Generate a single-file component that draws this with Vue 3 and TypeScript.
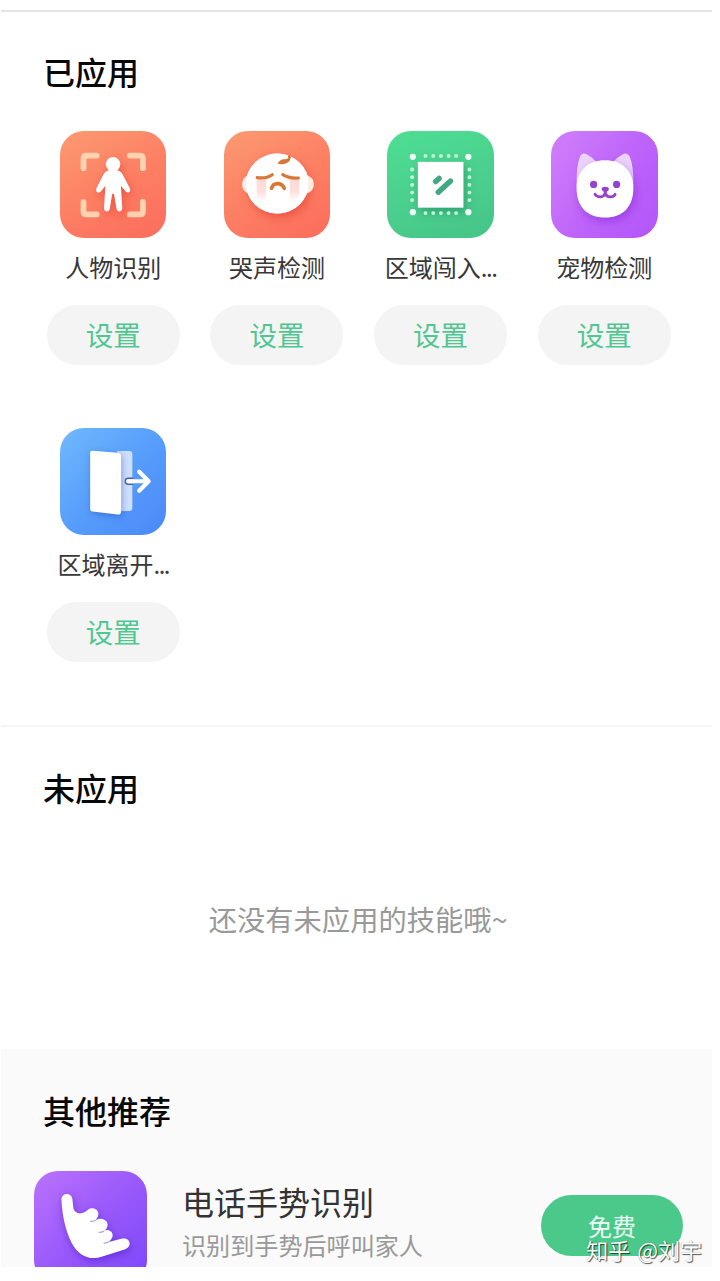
<script setup lang="ts">
interface Skill {
  kind: 'person' | 'cry' | 'area' | 'pet' | 'leave'
  name: string
  more?: boolean
}

const applied: Skill[] = [
  { kind: 'person', name: '人物识别' },
  { kind: 'cry', name: '哭声检测' },
  { kind: 'area', name: '区域闯入', more: true },
  { kind: 'pet', name: '宠物检测' },
  { kind: 'leave', name: '区域离开', more: true },
]

const dots: number[] = [38.3, 46, 53.7, 61.3, 68.8]
const corners: number[][] = [[25.7, 25.7], [81, 25.7], [25.7, 80.8], [81, 80.8]]
</script>

<template>
  <div class="screen">
    <section class="applied">
      <h2 class="heading">已应用</h2>
      <div class="grid">
        <div v-for="skill in applied" :key="skill.name" class="skill">
          <div class="tile" :class="skill.kind">
            <svg v-if="skill.kind === 'person'" viewBox="0 0 106 106">
              <g fill="none" stroke="#ffd2b0" stroke-width="5.8" stroke-linecap="round" stroke-linejoin="round">
                <path d="M23.4 37V27.5q0-3 3-3H36.5M69.5 24.5H79.5q3 0 3 3V37M82.5 70.5V80q0 3-3 3H69.5M36.5 83H26.4q-3 0-3-3V70.5" />
              </g>
              <g class="shade-red" fill="#fff">
                <circle cx="52.8" cy="33.2" r="7.2" />
                <path d="M47 39.5Q52.8 37.8 58.6 39.5Q61.5 40.8 62.800 44L69.700 57.300Q70.600 60 68.500 61Q66.400 61.700 65 59.700L60.600 54.500L62 76.500Q61.900 80 59.200 80Q56.700 80 56.200 77.300L53.900 63.500Q52.900 61 51.800 63.500L49.600 77.300Q49 80 46.500 80Q43.800 80 43.800 76.500L45.200 54.500L41 59.700Q39.300 61.800 37.200 61Q35.300 60 36.100 57.300L42.900 44Q44.200 40.800 47 39.500Z" />
              </g>
            </svg>

            <svg v-else-if="skill.kind === 'cry'" viewBox="0 0 106 106">
              <defs>
                <linearGradient id="tear" x1="0" y1="0" x2="0" y2="1">
                  <stop offset="0" stop-color="#ffd9d4" />
                  <stop offset=".55" stop-color="#ffe0dc" />
                  <stop offset="1" stop-color="#fff" />
                </linearGradient>
              </defs>
              <ellipse class="shade-red" cx="53" cy="52.300" rx="31.200" ry="29.800" fill="#fff" />
              <path d="M24.500 43.500Q18 46.500 18 53Q18 60 24.500 62.500ZM82 43.500Q89.500 46.500 89.500 53Q89.500 60 82 62.500Z" fill="#ffece0" />
              <ellipse cx="53" cy="52.300" rx="31.200" ry="29.800" fill="#fff" />
              <path d="M32.500 48h9.500v22h-7q-2.500-3-2.500-7zM65.500 48h9.500v15q-1 4-3 7h-6.500z" fill="url(#tear)" />
              <g fill="none" stroke="#d97836" stroke-width="3.200" stroke-linecap="round">
                <path d="M33 46.400Q42 47.800 48 43.500M58.500 43.500Q64.500 47.500 74 46.800" />
                <path d="M47.300 57C49 50.800 57.500 50.800 60 57" stroke-width="3.600" />
                <path d="M65 25.300Q66 28.800 61.500 29.200Q57 29.300 55.500 31.500Q61 32.500 64.500 28.800" stroke-width="2.600" />
              </g>
            </svg>

            <svg v-else-if="skill.kind === 'area'" viewBox="0 0 106 106">
              <rect class="shade-green" x="30.700" y="30.700" width="45.400" height="45.600" fill="#fff" />
              <g fill="#f2fff8">
                <circle v-for="(c, i) in corners" :key="i" :cx="c[0]" :cy="c[1]" r="3.100" />
              </g>
              <g fill="#c5f8dd">
                <template v-for="d in dots" :key="d">
                  <circle :cx="d" cy="24.800" r="1.900" />
                  <circle :cx="d" cy="81.700" r="1.900" />
                  <circle cx="25" :cy="d" r="1.900" />
                  <circle cx="82" :cy="d" r="1.900" />
                </template>
              </g>
              <path d="M48.400 50.300L51.800 47.200M51 61L63.200 49.800" fill="none" stroke="#40a982" stroke-width="5.400" stroke-linecap="round" />
            </svg>

            <svg v-else-if="skill.kind === 'pet'" viewBox="0 0 106 106">
              <path d="M25.500 55Q25 36 28.500 26.500Q31 20.500 36 23.500Q42 27 46 31.500L35 45ZM82 55Q82.500 36 78.500 26Q76 20.500 71 23.500Q65 27 61 31.500L72 45Z" fill="#ead3fb" />
              <path class="shade-purple" d="M53.700 29C70 29 82 39 82 56.500C82 75 72 86.200 53.700 86.200C35.500 86.200 25.400 75 25.400 56.500C25.400 39 37.500 29 53.700 29Z" fill="#fff" />
              <g fill="#9443cc">
                <circle cx="42.400" cy="53.200" r="3.600" />
                <circle cx="65.300" cy="53.200" r="3.600" />
                <path d="M51 56.200Q54 55 57 56.200Q58.600 57.500 57 59.300L54 61.600L51 59.300Q49.400 57.500 51 56.200Z" />
              </g>
              <path d="M54 60.500Q53.700 65.500 49 65.500Q45.500 65.600 43.800 63M54 60.500Q54.500 65.500 59 65.500Q62.500 65.600 63.800 63" fill="none" stroke="#9443cc" stroke-width="2.800" stroke-linecap="round" />
            </svg>

            <svg v-else viewBox="0 0 106 106">
              <path d="M57 22.800H69Q72 22.800 72 26V79.500Q72 82.500 69 82.500H57Z" fill="#cfdefd" />
              <path class="shade-blue" d="M32.500 22.700L57.500 24.700Q60.800 25.200 60.800 28.500V83Q60.800 86.500 57.300 86.100L32.300 83.200Q30 82.900 30 80.300V25Q30 22.500 32.500 22.700Z" fill="#fff" />
              <path d="M73 50H68Q65 50 65 53Q65 56 68 56H73" fill="#cfdefd" stroke="#425f9e" stroke-width="1.400" />
              <path d="M68 53H88M78.800 43.500L88.200 53L78.800 62.500" fill="none" stroke="#fff" stroke-width="4.200" stroke-linecap="round" stroke-linejoin="round" />
            </svg>
          </div>
          <div class="name">{{ skill.name }}<span v-if="skill.more" class="more">...</span></div>
          <button class="setup">设置</button>
        </div>
      </div>
    </section>

    <section class="unused">
      <h2 class="heading">未应用</h2>
      <p class="empty">还没有未应用的技能哦~</p>
    </section>

    <section class="recommend">
      <h2 class="heading">其他推荐</h2>
      <div class="row">
        <div class="tile gesture">
          <svg viewBox="0 0 112 112">
            <path class="shade-violet" d="M27.200 28.500C27 21.500 37 20.800 38 27.500L39 36.500C39.500 40 42.500 42 45.500 42C49 42 51 40.500 53.500 38.500C58 35 63.800 38 63.800 42.500C63.800 45 62.500 47 60.500 49C65 45.500 73 47.500 73 53.500C73 56 71 58.500 69 59.800C73 56.800 78 59.500 78 64C78 66.500 76 68.800 74 70.300L87.500 67C95.500 65.300 97.500 75 90.500 77.500L67 85C54 89.500 43 82 37.500 71.500C31 59 28 44 27.200 28.500Z" fill="#fff" />
            <path d="M60.500 49Q58 50.200 56 50M69 59.800Q66.500 61 64.500 60.800M74 70.300Q71.500 71.500 69.500 71.500" fill="none" stroke="#b6a0d8" stroke-width="1.200" stroke-linecap="round" />
          </svg>
        </div>
        <div class="info">
          <div class="title">电话手势识别</div>
          <div class="desc">识别到手势后呼叫家人</div>
        </div>
        <button class="free">免费</button>
      </div>
    </section>

    <div class="watermark">知乎 @刘宇</div>
  </div>
</template>

<style>
body {
  background: #fff;
}
</style>

<style scoped>
.screen {
  position: relative;
  box-sizing: border-box;
  width: 712px;
  height: 1267px;
  padding: 10px 0 0 1px;
  overflow: hidden;
  background: #fff;
  font-family: "Noto Sans CJK SC", sans-serif;
}

.heading {
  margin: 0;
  padding-left: 42px;
  font-size: 32px;
  line-height: 40px;
  font-weight: 500;
  color: #080808;
}

.applied {
  box-sizing: border-box;
  height: 717px;
  padding-top: 39px;
  border-top: 2px solid #e4e4e4;
  border-bottom: 2px solid #f6f6f6;
}

.grid {
  display: grid;
  grid-template-columns: repeat(4, 163.700px);
  grid-auto-rows: 297px;
  margin: 40px 0 0 30.400px;
}

.skill {
  display: flex;
  flex-direction: column;
  align-items: center;
}

.tile {
  width: 106.500px;
  height: 106.500px;
  flex: none;
  border-radius: 24px;
}

.tile svg {
  display: block;
  width: 100%;
  height: 100%;
}

.person,
.cry {
  background: linear-gradient(150deg, #fb9a72 0%, #fd8064 50%, #fc6c5c 100%);
}

.area {
  background: linear-gradient(160deg, #4ddf92 0%, #4bd08e 50%, #45c488 100%);
}

.pet {
  background: linear-gradient(125deg, #d180fb 0%, #bd63fa 55%, #b255fa 100%);
}

.leave {
  background: linear-gradient(135deg, #70b9fd 0%, #579efb 50%, #4a88f8 100%);
}

.shade-red {
  filter: drop-shadow(2px 4px 4px rgba(222, 50, 40, 0.5));
}

.shade-green {
  filter: drop-shadow(2px 4px 5px rgba(20, 120, 80, 0.5));
}

.shade-purple {
  filter: drop-shadow(2px 4px 4px rgba(120, 30, 200, 0.45));
}

.shade-blue {
  filter: drop-shadow(1px 2px 3px rgba(30, 70, 180, 0.45));
}

.shade-violet {
  filter: drop-shadow(1px 3px 4px rgba(70, 20, 190, 0.5));
}

.name {
  margin-top: 12px;
  font-size: 24px;
  line-height: 34px;
  color: #383838;
  white-space: nowrap;
}

.more {
  letter-spacing: -1.500px;
}

button {
  padding: 0;
  border: 0;
  font-family: inherit;
}

.setup {
  width: 133px;
  height: 60px;
  margin-top: 21px;
  border-radius: 30px;
  background: #f4f4f4;
  color: #50c791;
  font-size: 27.500px;
  line-height: 58px;
  padding-bottom: 2px;
}

.unused {
  display: flow-root;
  height: 322px;
}

.unused .heading {
  padding-top: 40px;
}

.empty {
  margin: 92px 0 0;
  padding-left: 3px;
  font-size: 28.300px;
  line-height: 40px;
  text-align: center;
  color: #999;
}

.recommend {
  height: 218px;
  display: flow-root;
  background: #fafafa;
}

.recommend .heading {
  padding-top: 41px;
}

.row {
  display: flex;
  margin-top: 41px;
  padding: 0 29px 0 33px;
}

.gesture {
  width: 113px;
  height: 113px;
  background: linear-gradient(135deg, #bb73fc 0%, #9c5bfb 45%, #7c47fb 100%);
}

.info {
  flex: 1;
  margin-left: 35px;
}

.title {
  margin-top: 8px;
  font-size: 32px;
  line-height: 44px;
  color: #333;
}

.desc {
  margin-top: 5px;
  font-size: 24.100px;
  line-height: 34px;
  color: #999;
}

.free {
  width: 142px;
  height: 61px;
  margin-top: 24px;
  border-radius: 31px;
  background: #4bc98a;
  color: #eefff6;
  font-size: 24px;
  line-height: 62px;
}

.watermark {
  position: absolute;
  right: 10px;
  bottom: 2px;
  font-size: 22px;
  line-height: 32px;
  word-spacing: 2px;
  color: #fff;
  white-space: nowrap;
  text-shadow: 1px 1px 1px rgba(0, 0, 0, 0.65), 0 0 1px rgba(0, 0, 0, 0.4);
}
</style>
